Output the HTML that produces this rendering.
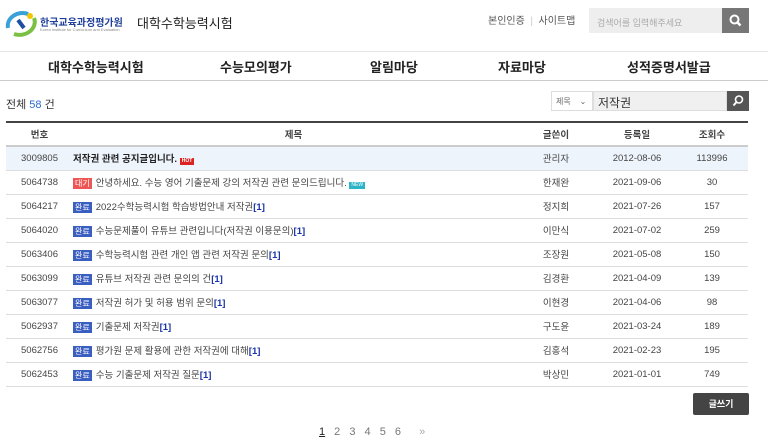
<!DOCTYPE html>
<html><head><meta charset="utf-8"><style>
*{margin:0;padding:0;box-sizing:border-box}
body{width:768px;height:442px;overflow:hidden;background:#fff;font-family:"Liberation Sans","Noto Sans CJK KR",sans-serif;color:#333;position:relative}
.a{position:absolute}
.nav span{position:absolute;top:57px;font-size:13px;font-weight:bold;color:#222}
table{position:absolute;left:6px;top:121px;width:742px;border-collapse:collapse;font-size:9.5px;table-layout:fixed}
th{height:24px;font-weight:bold;color:#444;border-top:2px solid #444;border-bottom:2px solid #ccc;font-size:9.5px}
td{height:24px;border-bottom:1px solid #ddd;color:#444;white-space:nowrap}
td.c{text-align:center}
.b{display:inline-block;color:#fff;font-size:8px;padding:0 2px;line-height:11px;margin-right:4px;background:#3b5fc0}
.r{background:#e55}
.k{color:#1a35a8;font-weight:bold}
</style></head><body>
<svg class="a" style="left:4px;top:8px" width="36" height="30" viewBox="0 0 36 30"><path d="M4 20C2 10 14 2 24 6" stroke="#3aa0d8" stroke-width="4" fill="none"/><path d="M10 26C22 30 34 20 30 10" stroke="#7ac043" stroke-width="4" fill="none"/><path d="M14 12l6 8" stroke="#1f4fa0" stroke-width="4"/><circle cx="26" cy="8" r="3" fill="#f5c500"/></svg>
<div class="a" style="left:40px;top:14px;font-size:10px;font-weight:bold;color:#1f3f9a">한국교육과정평가원</div>
<div class="a" style="left:40px;top:27px;font-size:4px;color:#888">Korea Institute for Curriculum and Evaluation</div>
<div class="a" style="left:137px;top:13px;font-size:13px;color:#222">대학수학능력시험</div>
<div class="a" style="left:488px;top:12px;font-size:10px;color:#555">본인인증 <span style="color:#ccc">&nbsp;|&nbsp;</span> 사이트맵</div>
<div class="a" style="left:589px;top:8px;width:133px;height:25px;background:#eee;font-size:9px;color:#aaa;padding:8px 0 0 8px">검색어를 입력해주세요</div>
<div class="a" style="left:722px;top:8px;width:27px;height:25px;background:#777"><svg width="27" height="25"><circle cx="12.5" cy="11.5" r="4" stroke="#fff" stroke-width="2" fill="none"/><path d="M15.5 14.5l3 3" stroke="#fff" stroke-width="2.5"/></svg></div>
<div class="a" style="left:0;top:51px;width:768px;height:1px;background:#e5e5e5"></div>
<div class="a" style="left:0;top:80px;width:768px;height:1px;background:#ccc"></div>
<div class="nav"><span style="left:48px">대학수학능력시험</span><span style="left:220px">수능모의평가</span><span style="left:370px">알림마당</span><span style="left:498px">자료마당</span><span style="left:627px">성적증명서발급</span></div>
<div class="a" style="left:6px;top:96px;font-size:11px">전체 <span style="color:#2a6bd0">58</span> 건</div>
<div class="a" style="left:551px;top:91px;width:42px;height:20px;border:1px solid #ddd;font-size:8px;color:#666;padding:4px 0 0 4px">제목 &nbsp;&nbsp;&nbsp;⌄</div>
<div class="a" style="left:593px;top:91px;width:134px;height:20px;background:#f0f0f0;border:1px solid #ddd;font-size:12px;padding:2px 0 0 4px;color:#333">저작권</div>
<div class="a" style="left:727px;top:91px;width:22px;height:20px;background:#555"><svg width="22" height="20"><circle cx="12" cy="8.5" r="3.5" stroke="#fff" stroke-width="1.6" fill="none"/><path d="M9.5 11l-3 3.5" stroke="#fff" stroke-width="2"/></svg></div>
<table>
<tr><th style="width:67px">번호</th><th>제목</th><th style="width:84px">글쓴이</th><th style="width:78px">등록일</th><th style="width:72px">조회수</th></tr>
<tr style="background:#eef4fb"><td class="c">3009805</td><td style="font-weight:bold;color:#222">저작권 관련 공지글입니다. <span class="b r" style="background:#d22;font-size:5px;line-height:7px">HOT</span></td><td class="c">관리자</td><td class="c">2012-08-06</td><td class="c">113996</td></tr>
<tr><td class="c">5064738</td><td><span class="b r">대기</span>안녕하세요. 수능 영어 기출문제 강의 저작권 관련 문의드립니다. <span class="b" style="background:#2bb3c8;font-size:5px;line-height:7px">NEW</span></td><td class="c">한재완</td><td class="c">2021-09-06</td><td class="c">30</td></tr>
<tr><td class="c">5064217</td><td><span class="b">완료</span>2022수학능력시험 학습방법안내 저작권<span class="k">[1]</span></td><td class="c">정지희</td><td class="c">2021-07-26</td><td class="c">157</td></tr>
<tr><td class="c">5064020</td><td><span class="b">완료</span>수능문제풀이 유튜브 관련입니다(저작권 이용문의)<span class="k">[1]</span></td><td class="c">이만식</td><td class="c">2021-07-02</td><td class="c">259</td></tr>
<tr><td class="c">5063406</td><td><span class="b">완료</span>수학능력시험 관련 개인 앱 관련 저작권 문의<span class="k">[1]</span></td><td class="c">조장원</td><td class="c">2021-05-08</td><td class="c">150</td></tr>
<tr><td class="c">5063099</td><td><span class="b">완료</span>유튜브 저작권 관련 문의의 건<span class="k">[1]</span></td><td class="c">김경환</td><td class="c">2021-04-09</td><td class="c">139</td></tr>
<tr><td class="c">5063077</td><td><span class="b">완료</span>저작권 허가 및 허용 범위 문의<span class="k">[1]</span></td><td class="c">이현경</td><td class="c">2021-04-06</td><td class="c">98</td></tr>
<tr><td class="c">5062937</td><td><span class="b">완료</span>기출문제 저작권<span class="k">[1]</span></td><td class="c">구도윤</td><td class="c">2021-03-24</td><td class="c">189</td></tr>
<tr><td class="c">5062756</td><td><span class="b">완료</span>평가원 문제 활용에 관한 저작권에 대해<span class="k">[1]</span></td><td class="c">김홍석</td><td class="c">2021-02-23</td><td class="c">195</td></tr>
<tr><td class="c">5062453</td><td><span class="b">완료</span>수능 기출문제 저작권 질문<span class="k">[1]</span></td><td class="c">박상민</td><td class="c">2021-01-01</td><td class="c">749</td></tr>
</table>
<div class="a" style="left:693px;top:393px;width:56px;height:22px;background:#444;border-radius:2px;color:#fff;font-size:9px;font-weight:bold;text-align:center;line-height:22px">글쓰기</div>
<div class="a" style="left:319px;top:426px;font-size:11px;color:#777;word-spacing:6px"><span style="color:#222;text-decoration:underline">1</span> 2 3 4 5 6 &nbsp;<span style="color:#aaa">»</span></div>
</body></html>
